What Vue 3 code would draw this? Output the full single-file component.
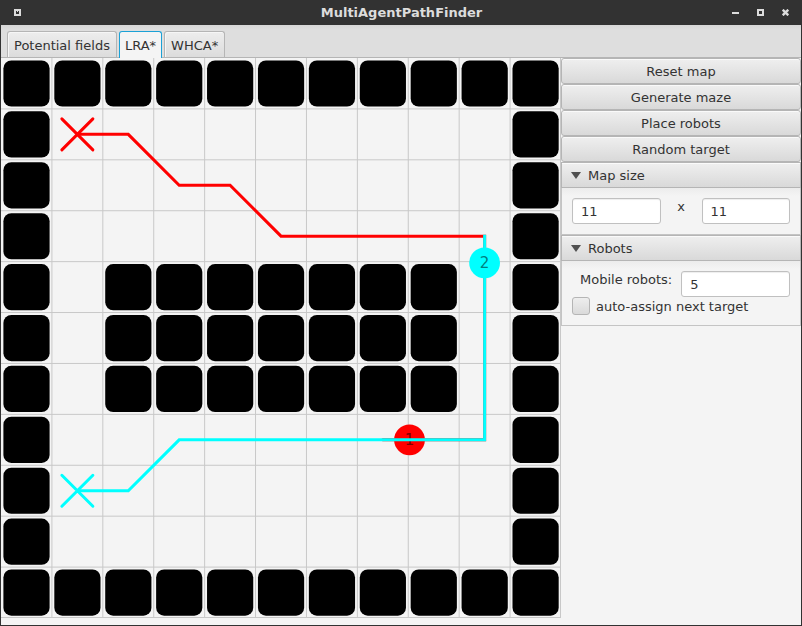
<script setup>
import { ref, computed } from 'vue'

const tabs = ['Potential fields', 'LRA*', 'WHCA*']
const activeTab = ref('LRA*')
const actions = ['Reset map', 'Generate maze', 'Place robots', 'Random target']
const mapWidth = ref('11')
const mapHeight = ref('11')
const robotCount = ref('5')
const autoAssign = ref(false)

const N = 11
const CELL = 560 / N
const at = (i) => (i + 0.5) * CELL

const lines = Array.from({ length: N }, (_, i) => (i + 1) * CELL - (i === N - 1 ? 0.5 : 0))

const walls = computed(() => {
  const list = []
  for (let row = 0; row < N; row++) {
    for (let col = 0; col < N; col++) {
      const border = row === 0 || col === 0 || row === N - 1 || col === N - 1
      const block = row >= 4 && row <= 6 && col >= 2 && col <= 8
      if (border || block) list.push({ row, col })
    }
  }
  return list
})

const toPoints = (cells) => cells.map(([c, r]) => `${at(c)},${at(r)}`).join(' ')
const redPath = toPoints([[1, 1], [2, 1], [3, 2], [4, 2], [5, 3], [9, 3], [9, 7], [7, 7]])
const cyanPath = toPoints([[9, 3], [9, 7], [3, 7], [2, 8], [1, 8]])
const cross = (c, r) => `M${at(c) - 15.5} ${at(r) - 15.5}l31 31m0 -31l-31 31`
</script>

<template>
  <div class="window">
    <header class="titlebar">
      <button class="win-btn" aria-label="Window menu">
        <svg width="7" height="7" viewBox="0 0 7 7"><path d="M0 0h7v7H0zM2 2v3h3V2z" fill="#dcdcdc" fill-rule="evenodd" /><path d="M3 2h1v1H3z" fill="#dcdcdc" /></svg>
      </button>
      <h1>MultiAgentPathFinder</h1>
      <div class="win-controls">
        <button class="win-btn" aria-label="Minimize">
          <svg width="7" height="7" viewBox="0 0 7 7"><path d="M0 3h7v2H0z" fill="#dcdcdc" /></svg>
        </button>
        <button class="win-btn" aria-label="Maximize">
          <svg width="7" height="7" viewBox="0 0 7 7"><path d="M0 0h7v7H0zM2 2v3h3V2z" fill="#dcdcdc" fill-rule="evenodd" /></svg>
        </button>
        <button class="win-btn" aria-label="Close">
          <svg width="7" height="7" viewBox="0 0 7 7"><path d="M0.7 0.7l5.6 5.6M6.3 0.7l-5.6 5.6" stroke="#dcdcdc" stroke-width="2.4" /></svg>
        </button>
      </div>
    </header>

    <nav class="tabs" role="tablist">
      <button
        v-for="tab in tabs"
        :key="tab"
        class="tab"
        :class="{ active: tab === activeTab }"
        role="tab"
        :aria-selected="tab === activeTab"
        @click="activeTab = tab"
      >{{ tab }}</button>
    </nav>

    <main class="content">
      <svg class="map" viewBox="0 0 560 560">
        <g stroke="#c8c8c8" stroke-width="1">
          <path v-for="p in lines" :key="p" :d="`M${p} 0V560M0 ${p}H560`" />
        </g>
        <rect
          v-for="w in walls"
          :key="`${w.row}-${w.col}`"
          :x="w.col * CELL + 2.4"
          :y="w.row * CELL + 2.4"
          width="46.2"
          height="46.2"
          rx="8"
        />
        <g fill="none" stroke-width="3" stroke-linecap="round">
          <polyline :points="redPath" stroke="#f00" />
          <path :d="cross(1, 1)" stroke="#f00" />
        </g>
        <circle cx="408.5" cy="381.8" r="15.4" fill="#f00" />
        <text x="408.5" y="387" fill="#800000">1</text>
        <g fill="none" stroke="#0ff" stroke-width="3" stroke-linecap="round">
          <polyline :points="cyanPath" stroke-linecap="square" />
          <path :d="cross(1, 8)" />
        </g>
        <circle cx="483.6" cy="204.8" r="15.4" fill="#0ff" />
        <text x="483.6" y="210" fill="#008080">2</text>
      </svg>

      <aside class="panel">
        <button v-for="a in actions" :key="a" class="action">{{ a }}</button>

        <details open>
          <summary><svg width="10" height="7" viewBox="0 0 10 7"><path d="M0 0h10L5 7z" fill="#505050" /></svg>Map size</summary>
          <div class="body size">
            <input v-model="mapWidth" type="text" aria-label="Map width" />
            <span>x</span>
            <input v-model="mapHeight" type="text" aria-label="Map height" />
          </div>
        </details>

        <details open>
          <summary><svg width="10" height="7" viewBox="0 0 10 7"><path d="M0 0h10L5 7z" fill="#505050" /></svg>Robots</summary>
          <div class="body robots">
            <div class="count">
              <label for="robot-count">Mobile robots:</label>
              <input id="robot-count" v-model="robotCount" type="text" />
            </div>
            <label class="check"><input v-model="autoAssign" type="checkbox" />auto-assign next target</label>
          </div>
        </details>
      </aside>
    </main>
  </div>
</template>

<style>
body {
  margin: 0;
  background: #f4f4f4;
}
</style>

<style scoped>
.window,
.window * {
  box-sizing: border-box;
}
.window {
  min-height: 100vh;
  display: flex;
  flex-direction: column;
  border: 1px solid #323232;
  border-top: 0;
  background: #f4f4f4;
  font: 13px/18px "DejaVu Sans", sans-serif;
  color: #333;
}
button,
input {
  font: inherit;
  color: inherit;
}
.titlebar {
  display: grid;
  grid-template-columns: 1fr auto 1fr;
  align-items: center;
  height: 25px;
  padding: 0 12px 0 13px;
  background: #323232;
  color: #dcdcdc;
}
.titlebar h1 {
  margin: 0;
  font-size: 13px;
  line-height: 16px;
  font-weight: bold;
}
.win-btn {
  display: flex;
  padding: 0;
  border: 0;
  background: none;
  justify-self: start;
}
.win-controls {
  display: flex;
  justify-content: flex-end;
  gap: 18px;
}
.tabs {
  display: flex;
  align-items: flex-end;
  gap: 2px;
  height: 33px;
  padding: 0 6px;
  background: linear-gradient(#d6d6d6, #dedede 5px);
  border-bottom: 1px solid #b5b5b5;
}
.tab {
  height: 26px;
  padding: 2px 6px 0;
  border: 1px solid #b5b5b5;
  border-bottom: 0;
  border-radius: 3px 3px 0 0;
  background: linear-gradient(#ededed, #dcdcdc);
  box-shadow: inset 1px 1px #f6f6f6;
}
.tab.active {
  height: 27px;
  margin-bottom: -1px;
  padding: 1px 5px 0;
  border-color: #1ba1d6;
  background: #f4f4f4;
  box-shadow: none;
}
.content {
  display: flex;
  align-items: flex-start;
}
.map {
  flex: 560 1 0;
  min-width: 0;
}
.map text {
  font: 15px "DejaVu Sans", sans-serif;
  text-anchor: middle;
}
.panel {
  flex: 240 1 0;
  min-width: 0;
  display: flex;
  flex-direction: column;
}
.action,
summary {
  height: 26px;
  border: 1px solid #b5b5b5;
  background: linear-gradient(#efefef, #d9d9d9);
  box-shadow: inset 0 1px #fafafa;
}
.action {
  padding: 2px 0 0;
  border-radius: 3px;
}
details {
  border-bottom: 1px solid #c4c4c4;
}
summary {
  display: flex;
  align-items: center;
  gap: 7px;
  padding: 2px 9px 0;
  list-style: none;
}
summary svg {
  margin-bottom: 2px;
}
.body {
  border: solid #c4c4c4;
  border-width: 0 1px;
  padding: 10px;
  background: linear-gradient(#ececec, #f4f4f4 8px);
}
input[type="text"] {
  min-width: 0;
  height: 26px;
  padding: 1px 8px;
  border: 1px solid #c0c0c0;
  border-radius: 3px;
  background: #fff;
  box-shadow: inset 0 1px 1px #eee;
}
.size {
  display: grid;
  grid-template-columns: 1fr 41px 1fr;
  text-align: center;
}
.count {
  display: flex;
  gap: 9px;
  padding-left: 8px;
}
.count input {
  flex: 1;
}
.check {
  display: flex;
  align-items: flex-start;
  gap: 6px;
  line-height: 20px;
  height: 18px;
}
.check input {
  appearance: none;
  width: 18px;
  height: 18px;
  margin: 0;
  border: 1px solid #b5b5b5;
  border-radius: 3px;
  background: linear-gradient(#eee, #dadada);
}
</style>
